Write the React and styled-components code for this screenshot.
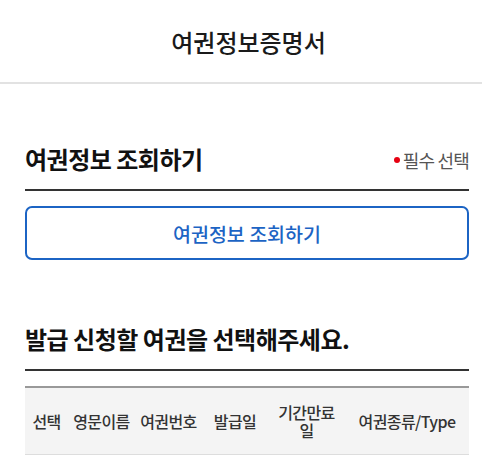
import React from "react";
import styled, { createGlobalStyle } from "styled-components";

const GlobalStyle = createGlobalStyle`
  body {
    margin: 0;
    background: #fff;
    font-family: "Noto Sans CJK KR", "Noto Sans", sans-serif;
    color: #111;
  }
`;

const Header = styled.header`
  height: 82px;
  padding-left: 15px;
  display: flex;
  align-items: center;
  justify-content: center;
  border-bottom: 2px solid #e2e2e2;

  h1 {
    margin: 0;
    font-size: 24px;
    font-weight: 500;
    color: #1a1a1a;
  }
`;

const Main = styled.main`
  margin-left: 25px;
  width: 444px;
  padding-top: 59px;
`;

const TitleRow = styled.div`
  display: flex;
  align-items: center;
  justify-content: space-between;
  height: 32px;
  padding-bottom: 14px;
  margin-top: ${(props) => props.gap || 0}px;
  border-bottom: 2px solid #333;
`;

const Title = styled.h2`
  margin: 0;
  font-size: 24px;
  line-height: 32px;
  font-weight: 700;
  letter-spacing: -0.5px;
  color: #111;
`;

const Required = styled.span`
  display: flex;
  align-items: center;
  gap: 3px;
  font-size: 18px;
  letter-spacing: -0.8px;
  color: #555;
  margin-top: 2px;

  &::before {
    content: "";
    width: 6px;
    height: 6px;
    border-radius: 50%;
    background: #e60012;
  }
`;

const LookupButton = styled.button`
  display: block;
  width: 100%;
  height: 54px;
  margin-top: 15px;
  border: 2px solid #1c64c4;
  border-radius: 7px;
  background: #fff;
  color: #1c64c4;
  font-family: inherit;
  font-size: 19.5px;
  font-weight: 500;
  cursor: pointer;
`;

const Table = styled.table`
  width: 100%;
  margin-top: 15px;
  border-collapse: collapse;
  table-layout: fixed;
  border-top: 2px solid #999;
`;

const Th = styled.th`
  height: 66px;
  padding: 0 4px;
  background: #f4f4f4;
  border-bottom: 1px solid #ddd;
  font-size: 16px;
  font-weight: 500;
  letter-spacing: -0.6px;
  line-height: 18px;
  color: #333;
  text-align: center;
  word-break: keep-all;
`;

const columns = [
  { label: "선택", width: 43 },
  { label: "영문이름", width: 67 },
  { label: "여권번호", width: 67 },
  { label: "발급일", width: 66 },
  { label: "기간만료일", width: 77, wrap: true },
  { label: "여권종류/Type", width: 124 },
];

export default function App() {
  return (
    <>
      <GlobalStyle />
      <Header>
        <h1>여권정보증명서</h1>
      </Header>
      <Main>
        <TitleRow>
          <Title>여권정보 조회하기</Title>
          <Required>필수 선택</Required>
        </TitleRow>
        <LookupButton>여권정보 조회하기</LookupButton>

        <TitleRow gap={63}>
          <Title>발급 신청할 여권을 선택해주세요.</Title>
        </TitleRow>
        <Table>
          <colgroup>
            {columns.map((c) => (
              <col key={c.label} style={{ width: c.width }} />
            ))}
          </colgroup>
          <thead>
            <tr>
              {columns.map((c) => (
                <Th key={c.label}>
                  {c.wrap ? (
                    <>
                      기간만료
                      <br />일
                    </>
                  ) : (
                    c.label
                  )}
                </Th>
              ))}
            </tr>
          </thead>
        </Table>
      </Main>
    </>
  );
}
